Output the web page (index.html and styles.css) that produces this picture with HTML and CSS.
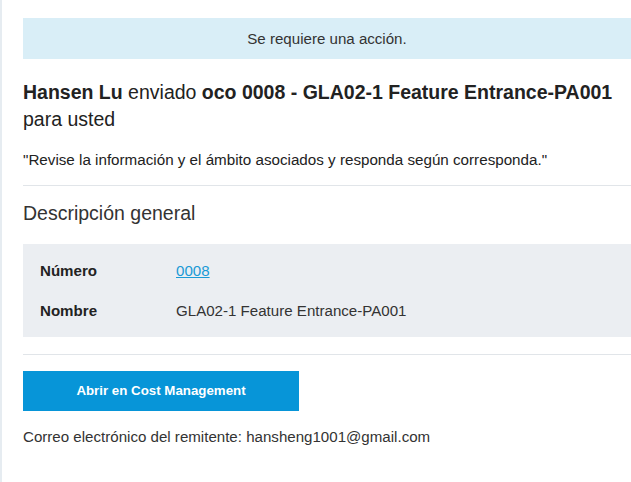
FILE: index.html
```html
<!DOCTYPE html>
<html lang="es">
<head>
    <meta charset="UTF-8">
    <meta name="viewport" content="width=device-width, initial-scale=1.0">
    <title>Se requiere una acción</title>
    <link rel="stylesheet" href="styles.css">
</head>
<body>
    <div class="mail">
        <div class="notice">Se requiere una acción.</div>

        <h1 class="headline">
            <b>Hansen Lu</b> enviado <b>oco 0008 - GLA02-1 Feature Entrance-PA001</b> para usted
        </h1>
        <p class="quote">"Revise la información y el ámbito asociados y responda según corresponda."</p>

        <hr class="divider">

        <h2 class="section-title">Descripción general</h2>
        <div class="summary">
            <div class="summary-row">
                <div class="summary-label">Número</div>
                <div class="summary-value"><a href="#">0008</a></div>
            </div>
            <div class="summary-row">
                <div class="summary-label">Nombre</div>
                <div class="summary-value">GLA02-1 Feature Entrance-PA001</div>
            </div>
        </div>

        <hr class="divider">

        <a class="button" href="#">Abrir en Cost Management</a>
        <p class="sender">Correo electrónico del remitente: hansheng1001@gmail.com</p>
    </div>
</body>
</html>
```

FILE: styles.css
```css
body {
    margin: 0;
    padding: 0;
    font-family: "Liberation Sans", Arial, sans-serif;
    color: #222;
    background: #fff;
    overflow: hidden;
}
.mail {
    border-left: 2px solid #e6ecf1;
    min-height: 482px;
    box-sizing: border-box;
    padding: 18px 0 0 21px;
    width: 660px;
}
.notice {
    background: #d9eef7;
    color: #333;
    font-size: 15.1px;
    text-align: center;
    height: 41px;
    line-height: 41px;
    padding-right: 29px;
}
.headline {
    font-size: 19.5px;
    font-weight: normal;
    line-height: 27px;
    margin: 20px 0 0;
    padding-right: 10px;
    color: #222;
}
.headline b {
    font-weight: bold;
}
.quote {
    font-size: 15.2px;
    margin: 18px 0 0;
    line-height: 18px;
    color: #222;
}
.divider {
    border: none;
    border-top: 1px solid #e1e5e9;
    margin: 16px 0 0;
}
.section-title {
    font-size: 19.5px;
    font-weight: normal;
    color: #333;
    margin: 15px 0 0;
    line-height: 24px;
}
.summary {
    background: #ebeef2;
    margin-top: 19px;
    padding: 16px 17px 15px;
}
.summary-row {
    display: flex;
    font-size: 15.1px;
    line-height: 22px;
}
.summary-row + .summary-row {
    margin-top: 18px;
}
.summary-label {
    width: 136px;
    font-weight: bold;
    color: #222;
}
.summary-value {
    color: #333;
}
.summary-value a {
    color: #1a9ad6;
}
.summary + .divider {
    margin-top: 17px;
}
.button {
    display: block;
    width: 276px;
    height: 40px;
    line-height: 40px;
    margin-top: 16px;
    background: #0795d8;
    color: #fff;
    font-size: 13.3px;
    font-weight: bold;
    text-align: center;
    text-decoration: none;
}
.sender {
    font-size: 15.1px;
    color: #333;
    margin: 16px 0 0;
    line-height: 20px;
}
```
